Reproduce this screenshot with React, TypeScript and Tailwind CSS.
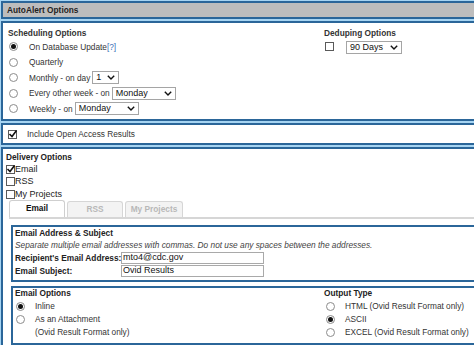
import React from "react";

function Radio({ checked }: { checked?: boolean }) {
  return (
    <span className="flex h-[9px] w-[9px] shrink-0 items-center justify-center rounded-full border border-[#8c8c8c] bg-white">
      {checked && <span className="h-[5px] w-[5px] rounded-full bg-[#111]" />}
    </span>
  );
}

function Check({ checked }: { checked?: boolean }) {
  return (
    <span className="relative block h-[9px] w-[9px] shrink-0 border border-[#5a5a5a] bg-white">
      {checked && (
        <svg viewBox="0 0 10 10" className="absolute -left-[1px] -top-[2px] h-[10px] w-[10px]">
          <path d="M1.5 5 L4 7.5 L8.5 1.5" fill="none" stroke="#111" strokeWidth="1.6" />
        </svg>
      )}
    </span>
  );
}

function Chevron() {
  return (
    <svg viewBox="0 0 8 5" className="h-[5px] w-[8px] shrink-0">
      <path d="M0.8 0.8 L4 4 L7.2 0.8" fill="none" stroke="#111" strokeWidth="1.4" />
    </svg>
  );
}

function Select({ value, className }: { value: string; className: string }) {
  return (
    <span
      className={`flex h-[13px] shrink-0 items-center justify-between border border-[#a5a5a5] bg-white pl-[3px] pr-[3px] text-[9px] text-[#111] ${className}`}
    >
      <span>{value}</span>
      <Chevron />
    </span>
  );
}

function Input({ value }: { value: string }) {
  return (
    <span className="flex h-[12px] w-[143px] shrink-0 items-center border border-[#a9a9a9] bg-white pl-[1px] text-[9px] text-[#111]">
      {value}
    </span>
  );
}

export default function App() {
  return (
    <div className="h-[345px] w-[474px] overflow-hidden bg-white font-['Liberation_Sans',Arial,sans-serif] text-[8.3px] text-[#333]">
      <div className="flex w-[490px] flex-col gap-[2px] bg-[#a6d4f2] p-[1px]">
        {/* Header */}
        <div className="border-2 border-[#2b6699] bg-white">
          <div className="flex h-[14px] items-center bg-[#bdbdbd] pl-[4px] font-bold text-[#222]">
            AutoAlert Options
          </div>
        </div>

        {/* Scheduling + deduping */}
        <div className="border-2 border-[#2b6699] bg-white">
          <div className="flex h-[96px] pl-[5px] pt-[5px]">
            <div className="w-[316px]">
              <div className="flex h-[11px] items-center font-bold text-[#333]">Scheduling Options</div>
              <div className="flex h-[15.5px] items-center pl-[1px]">
                <Radio checked />
                <span className="ml-[11px]">
                  On Database Update<span className="text-[#3d6fb6]">[?]</span>
                </span>
              </div>
              <div className="flex h-[15.5px] items-center pl-[1px]">
                <Radio />
                <span className="ml-[11px]">Quarterly</span>
              </div>
              <div className="flex h-[15.5px] items-center pl-[1px]">
                <Radio />
                <span className="ml-[11px] mr-[2px]">Monthly - on day</span>
                <Select value="1" className="w-[27px]" />
              </div>
              <div className="flex h-[15.5px] items-center pl-[1px]">
                <Radio />
                <span className="ml-[11px] mr-[2px]">Every other week - on</span>
                <Select value="Monday" className="w-[64px]" />
              </div>
              <div className="flex h-[15.5px] items-center pl-[1px]">
                <Radio />
                <span className="ml-[11px] mr-[2px]">Weekly - on</span>
                <Select value="Monday" className="w-[64px]" />
              </div>
            </div>
            <div>
              <div className="flex h-[11px] items-center font-bold text-[#333]">Deduping Options</div>
              <div className="mt-[2px] flex items-start">
                <span className="ml-[1px] mt-[1px] shrink-0">
                  <Check />
                </span>
                <Select value="90 Days" className="ml-[12px] w-[56px]" />
              </div>
            </div>
          </div>
        </div>

        {/* Open access */}
        <div className="border-2 border-[#2b6699] bg-white">
          <div className="flex h-[18px] items-center pl-[5px]">
            <Check checked />
            <span className="ml-[10px]">Include Open Access Results</span>
          </div>
        </div>

        {/* Delivery */}
        <div className="h-[220px] border-2 border-[#2b6699] bg-white">
          <div className="pl-[3px] pt-[3px]">
            <div className="flex h-[11px] items-center font-bold text-[#222]">Delivery Options</div>
            <div className="flex h-[12.5px] items-center text-[9px] text-[#222]">
              <Check checked />
              <span>Email</span>
            </div>
            <div className="flex h-[12.5px] items-center text-[9px] text-[#222]">
              <Check />
              <span>RSS</span>
            </div>
            <div className="flex h-[12.5px] items-center text-[9px] text-[#222]">
              <Check />
              <span>My Projects</span>
            </div>
          </div>

          {/* Tabs */}
          <div className="ml-[6px] mt-[1px] flex h-[17px] items-end gap-[2px] border-b-2 border-[#d6d6d6]">
            <div className="flex h-[17px] w-[56px] items-center justify-center rounded-t-[3px] border border-b-0 border-[#cfcfcf] bg-white font-bold text-[#111]">
              Email
            </div>
            <div className="flex h-[16px] w-[56px] items-center justify-center rounded-t-[3px] border border-b-0 border-[#d6d6d6] bg-[#f3f3f3] font-bold text-[#b8b8b8]">
              RSS
            </div>
            <div className="flex h-[16px] w-[58px] items-center justify-center rounded-t-[3px] border border-b-0 border-[#d6d6d6] bg-[#f3f3f3] font-bold text-[#b8b8b8]">
              My Projects
            </div>
          </div>

          <div className="ml-[8px] mt-[6px] flex flex-col gap-[4px]">
            {/* Email address & subject */}
            <div className="border-2 border-[#2b6699] pl-[2px] pt-[1px]">
              <div className="flex h-[12px] items-center font-bold text-[#222]">Email Address &amp; Subject</div>
              <div className="flex h-[12px] items-center whitespace-nowrap italic text-[#444]">
                Separate multiple email addresses with commas. Do not use any spaces between the addresses.
              </div>
              <div className="flex h-[13px] items-center">
                <span className="w-[106px] shrink-0 whitespace-nowrap font-bold text-[#222]">Recipient's Email Address:</span>
                <Input value="mto4@cdc.gov" />
              </div>
              <div className="flex h-[13px] items-center">
                <span className="w-[106px] shrink-0 whitespace-nowrap font-bold text-[#222]">Email Subject:</span>
                <Input value="Ovid Results" />
              </div>
              <div className="h-[2px]" />
            </div>

            {/* Email options / output type */}
            <div className="flex h-[59px] border-2 border-[#2b6699] pl-[2px]">
              <div className="w-[309px]">
                <div className="flex h-[12px] items-center font-bold text-[#222]">Email Options</div>
                <div className="flex h-[13px] items-center pl-[1px]">
                  <Radio checked />
                  <span className="ml-[10px]">Inline</span>
                </div>
                <div className="flex h-[13px] items-center pl-[1px]">
                  <Radio />
                  <span className="ml-[10px]">As an Attachment</span>
                </div>
                <div className="flex h-[13px] items-center pl-[20px]">(Ovid Result Format only)</div>
              </div>
              <div>
                <div className="flex h-[12px] items-center font-bold text-[#222]">Output Type</div>
                <div className="flex h-[13px] items-center pl-[2px]">
                  <Radio />
                  <span className="ml-[10px]">HTML (Ovid Result Format only)</span>
                </div>
                <div className="flex h-[13px] items-center pl-[2px]">
                  <Radio checked />
                  <span className="ml-[10px]">ASCII</span>
                </div>
                <div className="flex h-[13px] items-center pl-[2px]">
                  <Radio />
                  <span className="ml-[10px]">EXCEL (Ovid Result Format only)</span>
                </div>
              </div>
            </div>
          </div>
        </div>
      </div>
    </div>
  );
}
